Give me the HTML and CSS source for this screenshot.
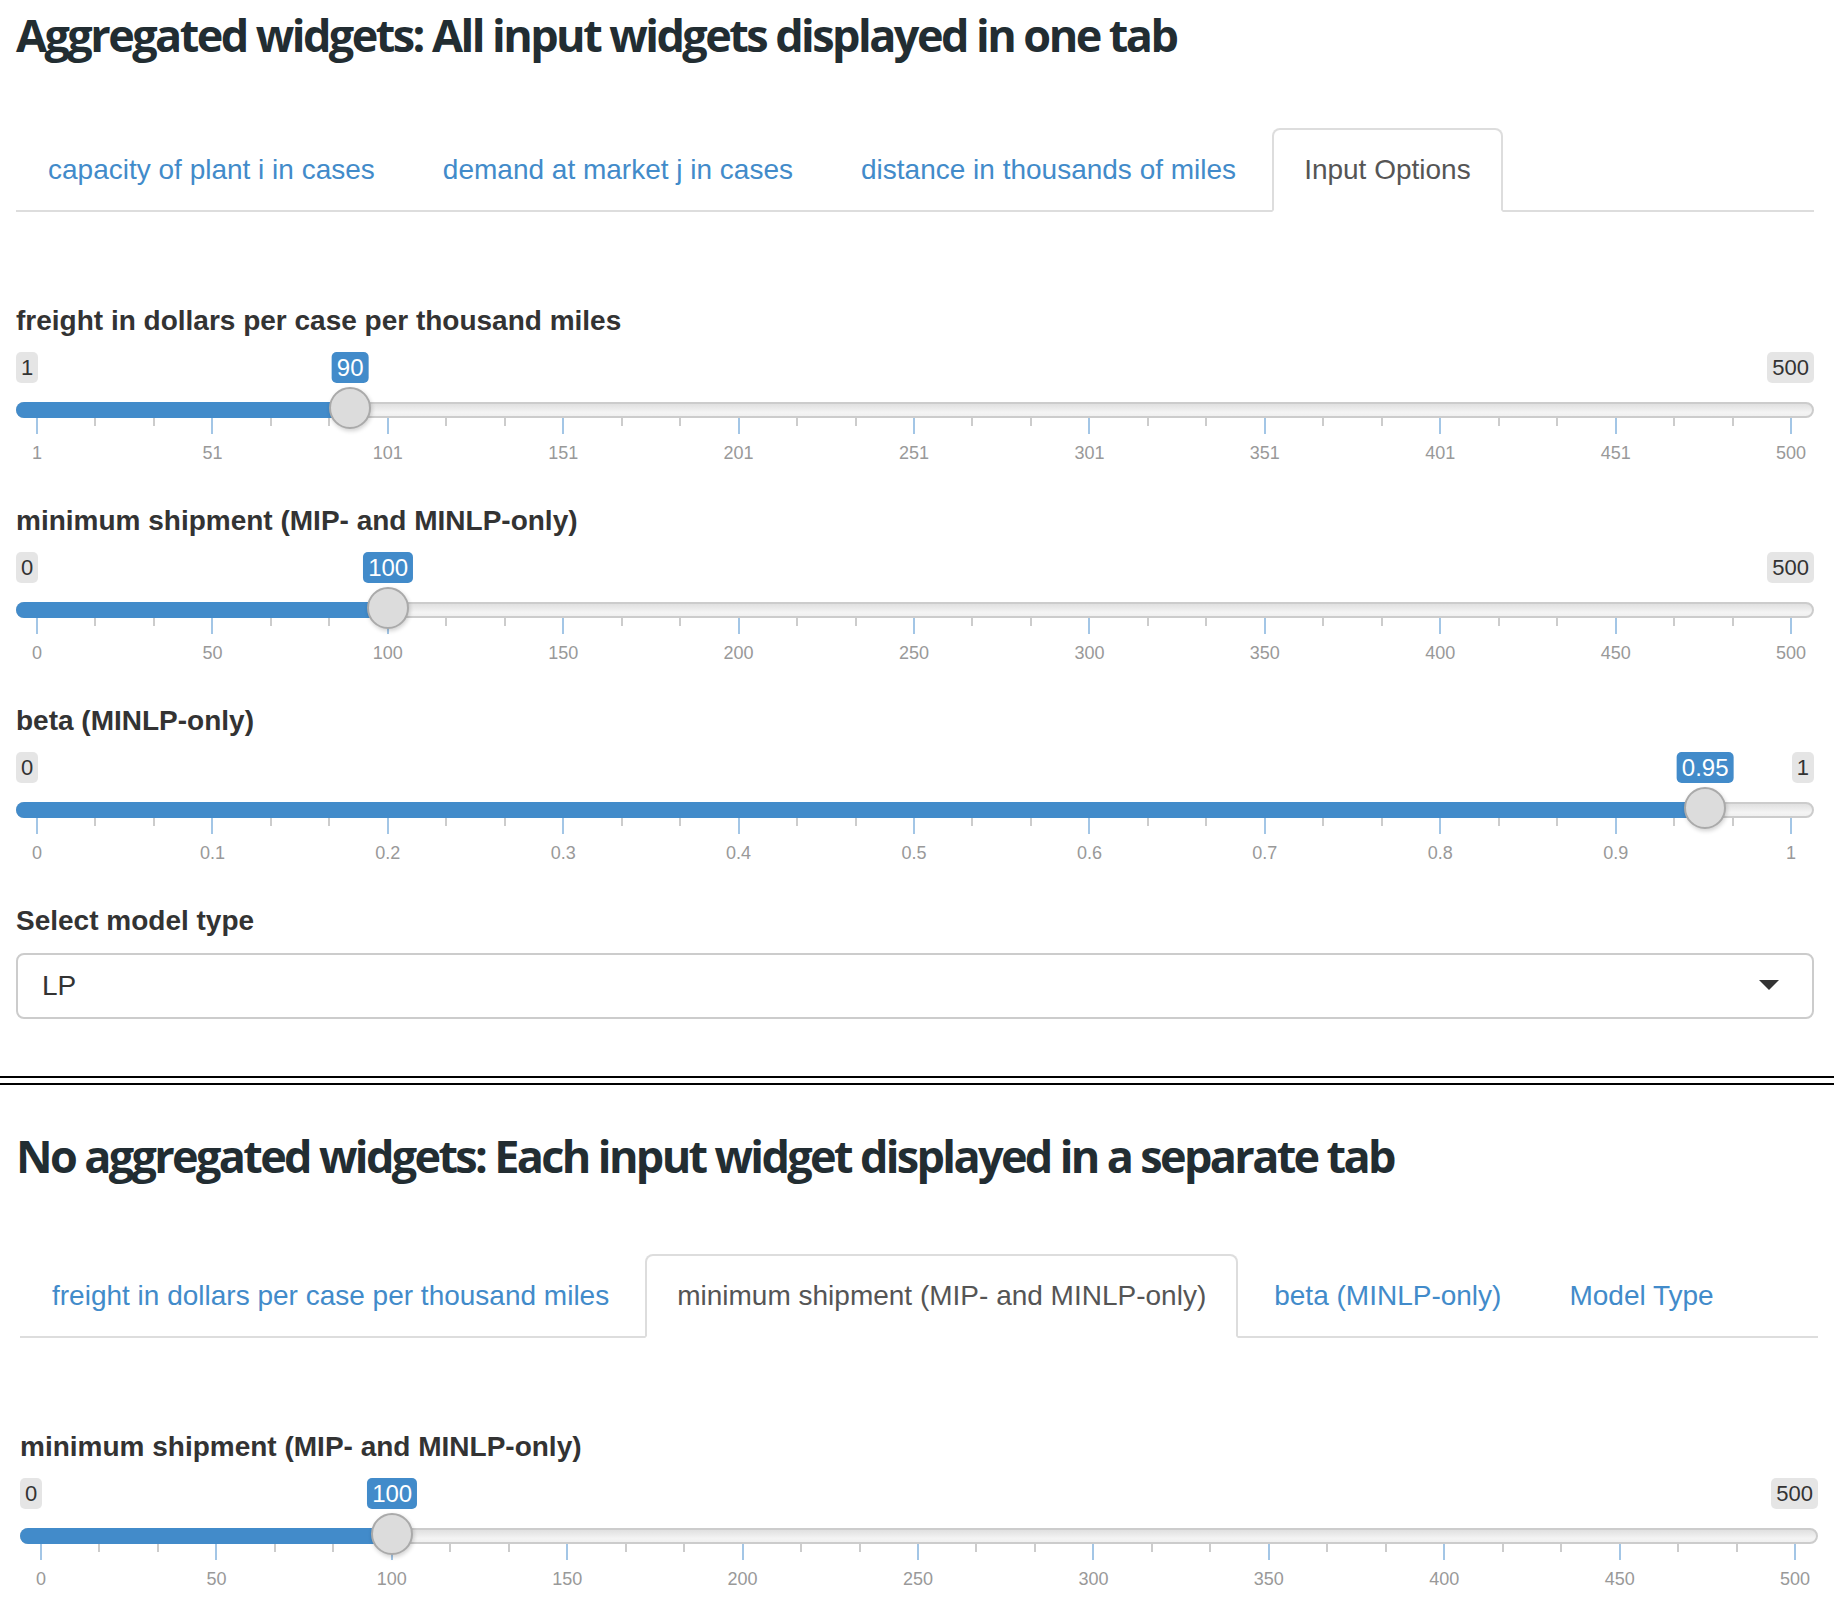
FILE: index.html
```html
<!DOCTYPE html>
<html lang="en">
<head>
<meta charset="utf-8">
<title>Widgets</title>
<link rel="stylesheet" href="styles.css">
</head>
<body>
<section class="sec sec1">
  <h2 class="title">Aggregated widgets: All input widgets displayed in one tab</h2>
  <ul class="tabs">
    <li><a href="#">capacity of plant i in cases</a></li>
    <li><a href="#">demand at market j in cases</a></li>
    <li><a href="#">distance in thousands of miles</a></li>
    <li class="active"><a href="#">Input Options</a></li>
  </ul>
  <div class="tab-content">
    <div class="field">
      <label class="field-label">freight in dollars per case per thousand miles</label>
      <div class="irs">
        <span class="irs-line"></span>
        <span class="irs-min">1</span>
        <span class="irs-max">500</span>
        <div class="irs-grid">
          <span class="gcell"><i class="glab">1</i></span>
          <span class="gcell"><i class="glab">51</i></span>
          <span class="gcell"><i class="glab">101</i></span>
          <span class="gcell"><i class="glab">151</i></span>
          <span class="gcell"><i class="glab">201</i></span>
          <span class="gcell"><i class="glab">251</i></span>
          <span class="gcell"><i class="glab">301</i></span>
          <span class="gcell"><i class="glab">351</i></span>
          <span class="gcell"><i class="glab">401</i></span>
          <span class="gcell"><i class="glab">451</i></span>
          <span class="gend"><i class="glab">500</i></span>
        </div>
        <div class="irs-range">
          <span class="irs-bar" style="width: calc(17.836% + 21px)"></span>
          <span class="irs-single" style="left: 17.836%">90</span>
          <span class="irs-handle" style="left: 17.836%"></span>
        </div>
      </div>
    </div>
    <div class="field">
      <label class="field-label">minimum shipment (MIP- and MINLP-only)</label>
      <div class="irs">
        <span class="irs-line"></span>
        <span class="irs-min">0</span>
        <span class="irs-max">500</span>
        <div class="irs-grid">
          <span class="gcell"><i class="glab">0</i></span>
          <span class="gcell"><i class="glab">50</i></span>
          <span class="gcell"><i class="glab">100</i></span>
          <span class="gcell"><i class="glab">150</i></span>
          <span class="gcell"><i class="glab">200</i></span>
          <span class="gcell"><i class="glab">250</i></span>
          <span class="gcell"><i class="glab">300</i></span>
          <span class="gcell"><i class="glab">350</i></span>
          <span class="gcell"><i class="glab">400</i></span>
          <span class="gcell"><i class="glab">450</i></span>
          <span class="gend"><i class="glab">500</i></span>
        </div>
        <div class="irs-range">
          <span class="irs-bar" style="width: calc(20% + 21px)"></span>
          <span class="irs-single" style="left: 20%">100</span>
          <span class="irs-handle" style="left: 20%"></span>
        </div>
      </div>
    </div>
    <div class="field">
      <label class="field-label">beta (MINLP-only)</label>
      <div class="irs">
        <span class="irs-line"></span>
        <span class="irs-min">0</span>
        <span class="irs-max">1</span>
        <div class="irs-grid">
          <span class="gcell"><i class="glab">0</i></span>
          <span class="gcell"><i class="glab">0.1</i></span>
          <span class="gcell"><i class="glab">0.2</i></span>
          <span class="gcell"><i class="glab">0.3</i></span>
          <span class="gcell"><i class="glab">0.4</i></span>
          <span class="gcell"><i class="glab">0.5</i></span>
          <span class="gcell"><i class="glab">0.6</i></span>
          <span class="gcell"><i class="glab">0.7</i></span>
          <span class="gcell"><i class="glab">0.8</i></span>
          <span class="gcell"><i class="glab">0.9</i></span>
          <span class="gend"><i class="glab">1</i></span>
        </div>
        <div class="irs-range">
          <span class="irs-bar" style="width: calc(95% + 21px)"></span>
          <span class="irs-single" style="left: 95%">0.95</span>
          <span class="irs-handle" style="left: 95%"></span>
        </div>
      </div>
    </div>
    <div class="field">
      <label class="field-label">Select model type</label>
      <div class="select">
        <span class="select-value">LP</span>
        <span class="caret"></span>
      </div>
    </div>
  </div>
</section>

<div class="divider"></div>

<section class="sec sec2">
  <h2 class="title title-2">No aggregated widgets: Each input widget displayed in a separate tab</h2>
  <div class="tabset-shift">
    <ul class="tabs tabs-2">
      <li><a href="#">freight in dollars per case per thousand miles</a></li>
      <li class="active"><a href="#">minimum shipment (MIP- and MINLP-only)</a></li>
      <li><a href="#">beta (MINLP-only)</a></li>
      <li><a href="#">Model Type</a></li>
    </ul>
    <div class="tab-content">
      <div class="field">
        <label class="field-label">minimum shipment (MIP- and MINLP-only)</label>
        <div class="irs">
          <span class="irs-line"></span>
          <span class="irs-min">0</span>
          <span class="irs-max">500</span>
          <div class="irs-grid">
            <span class="gcell"><i class="glab">0</i></span>
            <span class="gcell"><i class="glab">50</i></span>
            <span class="gcell"><i class="glab">100</i></span>
            <span class="gcell"><i class="glab">150</i></span>
            <span class="gcell"><i class="glab">200</i></span>
            <span class="gcell"><i class="glab">250</i></span>
            <span class="gcell"><i class="glab">300</i></span>
            <span class="gcell"><i class="glab">350</i></span>
            <span class="gcell"><i class="glab">400</i></span>
            <span class="gcell"><i class="glab">450</i></span>
            <span class="gend"><i class="glab">500</i></span>
          </div>
          <div class="irs-range">
            <span class="irs-bar" style="width: calc(20% + 21px)"></span>
            <span class="irs-single" style="left: 20%">100</span>
            <span class="irs-handle" style="left: 20%"></span>
          </div>
        </div>
      </div>
    </div>
  </div>
</section>
</body>
</html>
```

FILE: styles.css
```css
html, body {
  margin: 0;
  padding: 0;
  background: #fff;
}

body {
  font-family: "Liberation Sans", Arial, sans-serif;
  color: #333;
}

.sec {
  padding: 0 20px 0 16px;
}

.sec1 {
  padding-top: 10px;
}

.sec2 {
  padding-top: 46px;
}

.title {
  margin: 0;
  font-family: "Open Sans", "DejaVu Sans", sans-serif;
  font-weight: 700;
  font-size: 45px;
  line-height: 50px;
  letter-spacing: -2.55px;
  color: #222d32;
  white-space: nowrap;
}

.title-2 {
  letter-spacing: -2.65px;
}

.tabs {
  display: flex;
  list-style: none;
  margin: 68px 0 0;
  padding: 0;
  border-bottom: 2px solid #ddd;
}

.tabs-2 {
  margin-top: 73px;
}

.tabs li {
  margin: 0 4px -2px 0;
}

.tabs a {
  display: block;
  padding: 20px 30px;
  line-height: 40px;
  font-size: 28px;
  color: #428bca;
  text-decoration: none;
  border: 2px solid transparent;
  border-radius: 8px 8px 0 0;
  white-space: nowrap;
}

.tabs li.active a {
  color: #555;
  background: #fff;
  border-color: #ddd #ddd transparent;
}

.tabset-shift {
  margin: 0 -4px 0 4px;
}

.tab-content {
  padding-top: 89px;
}

.field-label {
  display: block;
  font-weight: 700;
  font-size: 28px;
  line-height: 40px;
  color: #333;
}

/* range slider */
.irs {
  position: relative;
  height: 160px;
}

.irs-line {
  position: absolute;
  left: 0;
  right: 0;
  top: 61px;
  height: 16px;
  box-sizing: border-box;
  border: 2px solid #ccc;
  border-radius: 8px;
  background: linear-gradient(to bottom, #e0e0e0 0%, #f4f4f4 70%, #f0f0f0 100%);
}

.irs-min,
.irs-max,
.irs-single {
  position: absolute;
  top: 11px;
  height: 31px;
  line-height: 31px;
  padding: 0 5px;
  font-size: 22px;
  border-radius: 5px;
  white-space: nowrap;
}

.irs-min,
.irs-max {
  background: rgba(0, 0, 0, 0.1);
  color: #333;
}

.irs-min {
  left: 0;
}

.irs-max {
  right: 0;
}

.irs-range {
  position: absolute;
  left: 21px;
  right: 21px;
  top: 0;
  bottom: 0;
}

.irs-bar {
  position: absolute;
  left: -21px;
  top: 61px;
  height: 16px;
  background: #428bca;
  border-radius: 8px 0 0 8px;
}

.irs-single {
  background: #428bca;
  color: #fff;
  font-size: 24px;
  transform: translateX(-50%);
}

.irs-handle {
  position: absolute;
  top: 46px;
  width: 42px;
  height: 42px;
  margin-left: -21px;
  box-sizing: border-box;
  border: 2px solid #aaa;
  border-radius: 50%;
  background: #dcdcdc;
  box-shadow: 1px 2px 4px rgba(0, 0, 0, 0.18);
}

.irs-grid {
  position: absolute;
  left: 20px;
  right: 22px;
  top: 77px;
  height: 48px;
  display: flex;
}

.gcell {
  flex: 1 1 0;
  position: relative;
  background: linear-gradient(#a3c6e6, #a3c6e6) no-repeat 0 0 / 2px 16px;
}

.gcell::before,
.gcell::after {
  content: "";
  position: absolute;
  top: 0;
  width: 2px;
  height: 8px;
  background: #ccc;
}

.gcell::before {
  left: 33.333%;
}

.gcell::after {
  left: 66.667%;
}

.gend {
  flex: 0 0 2px;
  position: relative;
  background: linear-gradient(#a3c6e6, #a3c6e6) no-repeat 0 0 / 2px 16px;
}

.glab {
  position: absolute;
  left: 1px;
  top: 25px;
  transform: translateX(-50%);
  font-style: normal;
  font-size: 18px;
  line-height: 20px;
  color: #999;
  white-space: nowrap;
}

/* select */
.select {
  margin-top: 12px;
  height: 66px;
  box-sizing: border-box;
  border: 2px solid #ccc;
  border-radius: 8px;
  display: flex;
  align-items: center;
  justify-content: space-between;
  padding: 0 33px 0 24px;
  font-size: 28px;
  color: #333;
}

.caret {
  width: 0;
  height: 0;
  border-left: 10px solid transparent;
  border-right: 10px solid transparent;
  border-top: 10px solid #333;
  margin-top: -2px;
}

.divider {
  margin-top: 57px;
  height: 5px;
  border-top: 2px solid #000;
  border-bottom: 2px solid #000;
}
```
